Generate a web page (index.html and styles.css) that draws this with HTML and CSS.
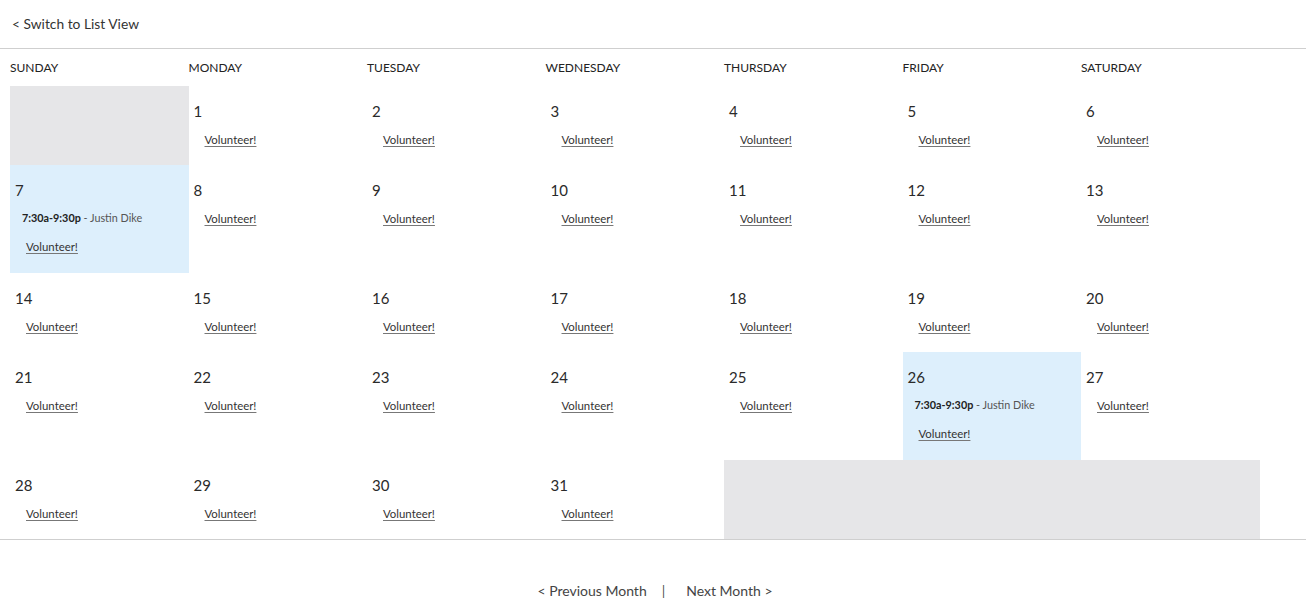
FILE: index.html
```html
<!DOCTYPE html>
<html>
<head>
<meta charset="utf-8">
<link rel="stylesheet" href="styles.css">
</head>
<body>
<div class="topbar"><a class="switch" href="#">&lt; Switch to List View</a></div>
<div class="calendar">
  <div class="dow">Sunday</div><div class="dow">Monday</div><div class="dow">Tuesday</div><div class="dow">Wednesday</div><div class="dow">Thursday</div><div class="dow">Friday</div><div class="dow">Saturday</div>

  <div class="cell empty"></div>
  <div class="cell"><div class="num">1</div><a class="vol" href="#">Volunteer!</a></div>
  <div class="cell"><div class="num">2</div><a class="vol" href="#">Volunteer!</a></div>
  <div class="cell"><div class="num">3</div><a class="vol" href="#">Volunteer!</a></div>
  <div class="cell"><div class="num">4</div><a class="vol" href="#">Volunteer!</a></div>
  <div class="cell"><div class="num">5</div><a class="vol" href="#">Volunteer!</a></div>
  <div class="cell"><div class="num">6</div><a class="vol" href="#">Volunteer!</a></div>

  <div class="cell booked"><div class="num">7</div><div class="event"><b>7:30a-9:30p</b> - Justin Dike</div><a class="vol" href="#">Volunteer!</a></div>
  <div class="cell"><div class="num">8</div><a class="vol" href="#">Volunteer!</a></div>
  <div class="cell"><div class="num">9</div><a class="vol" href="#">Volunteer!</a></div>
  <div class="cell"><div class="num">10</div><a class="vol" href="#">Volunteer!</a></div>
  <div class="cell"><div class="num">11</div><a class="vol" href="#">Volunteer!</a></div>
  <div class="cell"><div class="num">12</div><a class="vol" href="#">Volunteer!</a></div>
  <div class="cell"><div class="num">13</div><a class="vol" href="#">Volunteer!</a></div>

  <div class="cell"><div class="num">14</div><a class="vol" href="#">Volunteer!</a></div>
  <div class="cell"><div class="num">15</div><a class="vol" href="#">Volunteer!</a></div>
  <div class="cell"><div class="num">16</div><a class="vol" href="#">Volunteer!</a></div>
  <div class="cell"><div class="num">17</div><a class="vol" href="#">Volunteer!</a></div>
  <div class="cell"><div class="num">18</div><a class="vol" href="#">Volunteer!</a></div>
  <div class="cell"><div class="num">19</div><a class="vol" href="#">Volunteer!</a></div>
  <div class="cell"><div class="num">20</div><a class="vol" href="#">Volunteer!</a></div>

  <div class="cell"><div class="num">21</div><a class="vol" href="#">Volunteer!</a></div>
  <div class="cell"><div class="num">22</div><a class="vol" href="#">Volunteer!</a></div>
  <div class="cell"><div class="num">23</div><a class="vol" href="#">Volunteer!</a></div>
  <div class="cell"><div class="num">24</div><a class="vol" href="#">Volunteer!</a></div>
  <div class="cell"><div class="num">25</div><a class="vol" href="#">Volunteer!</a></div>
  <div class="cell booked"><div class="num">26</div><div class="event"><b>7:30a-9:30p</b> - Justin Dike</div><a class="vol" href="#">Volunteer!</a></div>
  <div class="cell"><div class="num">27</div><a class="vol" href="#">Volunteer!</a></div>

  <div class="cell"><div class="num">28</div><a class="vol" href="#">Volunteer!</a></div>
  <div class="cell"><div class="num">29</div><a class="vol" href="#">Volunteer!</a></div>
  <div class="cell"><div class="num">30</div><a class="vol" href="#">Volunteer!</a></div>
  <div class="cell"><div class="num">31</div><a class="vol" href="#">Volunteer!</a></div>
  <div class="cell empty span3"></div>
</div>
<div class="pager">
  <a href="#">&lt; Previous Month</a>
  <span class="sep">|</span>
  <a href="#">Next Month &gt;</a>
</div>
</body>
</html>
```
FILE: styles.css
```css
html, body {
  margin: 0;
  padding: 0;
  background: #fff;
  font-family: Lato, "Liberation Sans", sans-serif;
  color: #333;
}
a { color: inherit; text-decoration: none; }

.topbar {
  height: 49px;
  box-sizing: border-box;
  border-bottom: 1px solid #cfcfcf;
  padding-left: 12px;
  display: flex;
  align-items: center;
}
.switch {
  font-size: 13.8px;
  color: #333;
  position: relative;
  top: -1px;
}

.calendar {
  display: grid;
  grid-template-columns: repeat(7, 178.5px);
  padding-left: 10px;
}
.dow {
  font-size: 12px;
  text-transform: uppercase;
  color: #222;
  height: 37px;
  line-height: 37px;
}
.cell {
  padding: 16px 0 18.4px 5px;
  min-height: 45px;
}
.num {
  font-size: 15px;
  line-height: 18px;
  color: #2a2a2a;
}
.vol {
  display: inline-block;
  margin-top: 13px;
  margin-left: 11px;
  font-size: 11.4px;
  line-height: 14px;
  color: #333;
  text-decoration: underline;
  text-decoration-color: #777;
  text-underline-offset: 2px;
}
.event {
  margin-top: 12px;
  margin-left: 7px;
  font-size: 10.8px;
  line-height: 14px;
  color: #555;
}
.event b { color: #222; font-weight: 700; }
.event + .vol { margin-top: 15px; }

.empty { background: #e6e6e8; padding: 0; }
.span3 { grid-column: span 3; }
.booked { background: #ddeffc; }

.pager {
  border-top: 1px solid #cfcfcf;
  padding-top: 42px;
  padding-left: 4px;
  display: flex;
  justify-content: center;
  font-size: 14px;
  color: #444;
}
.pager a { color: #444; }
.sep { margin: 0 21px 0 15px; color: #555; }
```
